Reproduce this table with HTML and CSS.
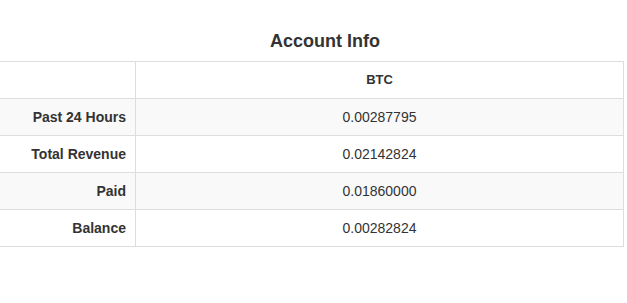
FILE: index.html
```html
<!DOCTYPE html>
<html>
<head>
<meta charset="utf-8">
<link rel="stylesheet" href="styles.css">
</head>
<body>
<div class="panel">
  <h3 class="title">Account Info</h3>
  <table class="info">
    <thead>
      <tr><th class="label"></th><th class="value">BTC</th></tr>
    </thead>
    <tbody>
      <tr class="odd"><td class="label">Past 24 Hours</td><td class="value">0.00287795</td></tr>
      <tr><td class="label">Total Revenue</td><td class="value">0.02142824</td></tr>
      <tr class="odd"><td class="label">Paid</td><td class="value">0.01860000</td></tr>
      <tr><td class="label">Balance</td><td class="value">0.00282824</td></tr>
    </tbody>
  </table>
</div>
</body>
</html>
```

FILE: styles.css
```css
html, body {
  margin: 0;
  padding: 0;
  background: #fff;
}
body {
  font-family: "Liberation Sans", Arial, sans-serif;
  font-size: 14px;
  color: #333;
}
.panel {
  width: 624px;
}
.title {
  margin: 31px 0 10px;
  font-size: 18px;
  line-height: 20px;
  font-weight: bold;
  text-align: center;
  padding-left: 26px;
  color: #333;
}
.info {
  width: 624px;
  border-collapse: collapse;
  border-right: 1px solid #ddd;
}
.info th, .info td {
  border-top: 1px solid #ddd;
  border-bottom: 1px solid #ddd;
  padding: 8px;
  line-height: 20px;
  height: 20px;
}
.info th {
  font-size: 13px;
  font-weight: bold;
}
.info .label {
  width: 118px;
  text-align: right;
  font-weight: bold;
  border-right: 1px solid #ddd;
  padding-right: 9px;
}
.info .value {
  text-align: center;
}
.info tr.odd td {
  background: #f9f9f9;
}
```
